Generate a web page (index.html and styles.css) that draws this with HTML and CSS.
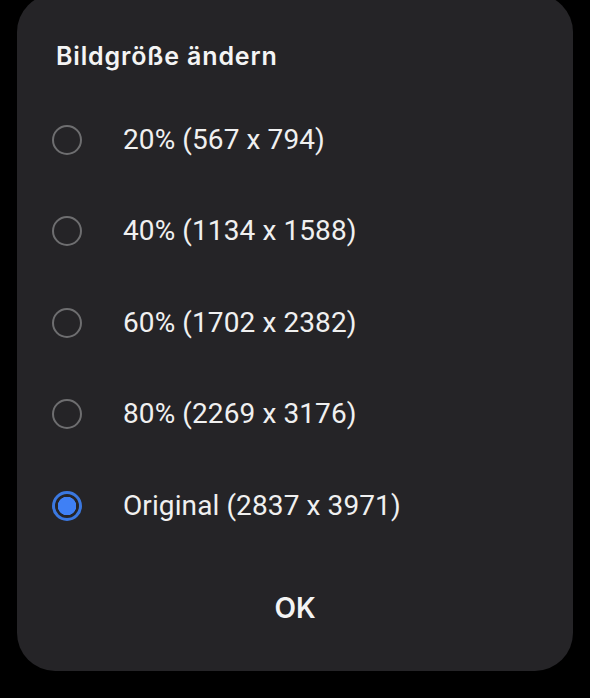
FILE: index.html
```html
<!DOCTYPE html>
<html lang="de">
  <head>
    <title>Bildgröße ändern</title>
    <link rel="stylesheet" href="styles.css">
  </head>
  <body>
    <div class="dialog">
      <h2 class="title">Bildgröße ändern</h2>
      <div class="options">
        <label class="option">
          <span class="radio"></span>
          <span class="label">20% (567 x 794)</span>
        </label>
        <label class="option">
          <span class="radio"></span>
          <span class="label">40% (1134 x 1588)</span>
        </label>
        <label class="option">
          <span class="radio"></span>
          <span class="label">60% (1702 x 2382)</span>
        </label>
        <label class="option">
          <span class="radio"></span>
          <span class="label">80% (2269 x 3176)</span>
        </label>
        <label class="option">
          <span class="radio checked"></span>
          <span class="label">Original (2837 x 3971)</span>
        </label>
      </div>
      <div class="actions">
        <button class="ok">OK</button>
      </div>
    </div>
  </body>
</html>
```

FILE: styles.css
```css
body {
  margin: 0;
  background-color: #000;
  font-family: Roboto, "Noto Sans", sans-serif;
  color: #f2f2f2;
  height: 698px;
  overflow: hidden;
}

.dialog {
  margin: -6px 0 0 17px;
  width: 556px;
  height: 677px;
  box-sizing: border-box;
  background-color: #252427;
  border-radius: 38px;
  padding-top: 47px;
  display: flex;
  flex-direction: column;
}

.title {
  margin: 0 0 23px 39px;
  font-family: Inter, Roboto, sans-serif;
  font-size: 25px;
  line-height: 30px;
  font-weight: 600;
  letter-spacing: 0.85px;
  color: #f4f4f4;
}

.options {
  display: flex;
  flex-direction: column;
}

.option {
  display: flex;
  align-items: center;
  height: 91.5px;
  padding-left: 35px;
}

.radio {
  width: 30px;
  height: 30px;
  box-sizing: border-box;
  border: 2px solid #6e6e70;
  border-radius: 50%;
  margin-right: 41px;
  flex-shrink: 0;
}

.radio.checked {
  border: 3px solid #3b78e0;
  background: radial-gradient(circle, #3f80f5 0, #3f80f5 9px, #252427 9.5px);
}

.label {
  font-size: 28px;
  line-height: 34px;
  letter-spacing: 0.1px;
  color: #f0f0f0;
}

.actions {
  display: flex;
  justify-content: center;
  margin-top: 26px;
}

.ok {
  background: none;
  border: none;
  color: #f4f4f4;
  font-family: Inter, Roboto, sans-serif;
  font-size: 28px;
  font-weight: 600;
  height: 60px;
  padding: 0 30px;
}
```
